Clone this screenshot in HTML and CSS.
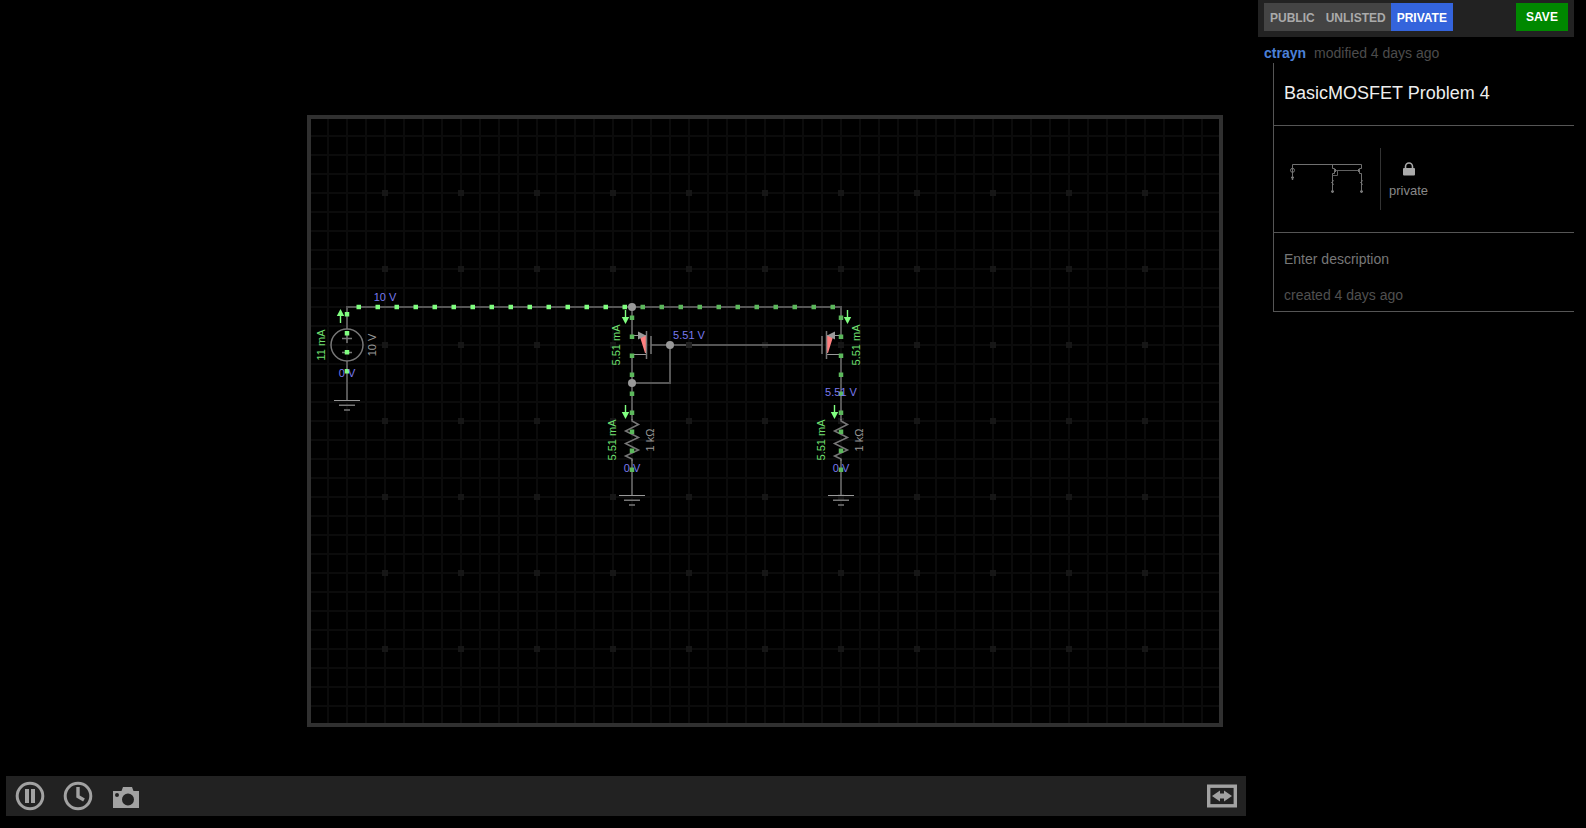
FILE: index.html
```html
<!DOCTYPE html>
<html lang="en">
<head>
<meta charset="utf-8">
<title>BasicMOSFET Problem 4</title>
<link rel="stylesheet" href="styles.css">
</head>
<body>
<main class="workspace">
  <div class="stage">
    <svg class="schematic" viewBox="0 0 1246 776" preserveAspectRatio="xMinYMin meet" role="img" aria-label="Circuit schematic">
      <defs>
        <pattern id="grid" x="327" y="135" width="19" height="19" patternUnits="userSpaceOnUse">
          <path d="M0 0H19V2H2V19H0Z" fill="#0b0b0b"/>
        </pattern>
        <pattern id="majors" x="382" y="190" width="76" height="76" patternUnits="userSpaceOnUse">
          <rect width="6" height="6" fill="#161616"/>
        </pattern>
        <g id="ground">
          <path d="M-13 .5H13" class="thin"/><path d="M-8 5.200H8M-3 10H3" class="part"/>
        </g>
        <g id="resistor">
          <path d="M0 0V2L6.500 5.500L-6.500 12L6.500 18.500L-6.500 24.500L6.500 31L-6.500 37L0 40V42" class="part"/>
        </g>
        <path id="down" d="M-.7 0H.7V7H3.700L0 14L-3.700 7H-.7Z"/>
      </defs>
      <rect x="309" y="117" width="912" height="608" class="frame"/>
      <rect x="311" y="119" width="908" height="604" fill="url(#grid)"/>
      <rect x="320" y="180" width="880" height="490" fill="url(#majors)"/>

      <g class="wire">
        <path d="M347 329V307H841V336"/>
        <path d="M347 361V400"/>
        <path d="M632 307V336M632 354V420M632 459V495"/>
        <path d="M841 354V420M841 459V495"/>
        <path d="M651 345H822M632 383H670V345"/>
      </g>
      <rect x="686" y="342" width="6" height="6" fill="#222"/>

      <circle cx="347" cy="345" r="16" class="part"/>
      <path d="M342 338.500H352M347 334V343M342 352.500H352" class="part"/>
      <use href="#ground" x="347" y="400"/>
      <use href="#ground" x="632" y="495"/>
      <use href="#ground" x="841" y="495"/>
      <use href="#resistor" x="632" y="419"/>
      <use href="#resistor" x="841" y="419"/>

      <path d="M640 337L645 353H646V335Z" class="channel"/>
      <path d="M632 335.500H646M632 354.500H646" class="thin"/>
      <path d="M646.500 331V359M651 336V354" class="part"/>
      <path d="M638 331.500L646 335.500L638 339.500Z" class="gray"/>

      <path d="M833 337L828 353H827V335Z" class="channel"/>
      <path d="M841 335.500H827M841 354.500H827" class="thin"/>
      <path d="M826.500 331V359M822 336V354" class="part"/>
      <path d="M835 331.500V339.500L827 335.500Z" class="gray"/>

      <g class="dots dots-high">
        <path d="M356.500 307H628"/>
        <path d="M347 312V375"/>
      </g>
      <g class="dots">
        <path d="M640.500 307H836"/>
        <path d="M632 315.500V473"/>
        <path d="M841 315.500V473"/>
      </g>
      <g class="gray">
        <circle cx="632" cy="307" r="4"/><circle cx="632" cy="383" r="4"/><circle cx="670" cy="345" r="4"/>
      </g>

      <g class="arrow">
        <use href="#down" transform="translate(340.500 323) rotate(180)"/>
        <use href="#down" x="625.500" y="310"/>
        <use href="#down" x="847.500" y="310"/>
        <use href="#down" x="625.500" y="405"/>
        <use href="#down" x="834.500" y="405"/>
      </g>

      <g class="label volt">
        <text x="385" y="301">10 V</text>
        <text x="347" y="377">0 V</text>
        <text x="689" y="339">5.51 V</text>
        <text x="841" y="396">5.51 V</text>
        <text x="632" y="472">0 V</text>
        <text x="841" y="472">0 V</text>
      </g>
      <g class="label amp">
        <text transform="translate(325 345) rotate(-90)">11 mA</text>
        <text transform="translate(620 345) rotate(-90)">5.51 mA</text>
        <text transform="translate(860 345) rotate(-90)">5.51 mA</text>
        <text transform="translate(616 440) rotate(-90)">5.51 mA</text>
        <text transform="translate(825 440) rotate(-90)">5.51 mA</text>
      </g>
      <g class="label value">
        <text transform="translate(376 345) rotate(-90)">10 V</text>
        <text transform="translate(654 440) rotate(-90)">1 kΩ</text>
        <text transform="translate(863 440) rotate(-90)">1 kΩ</text>
      </g>
    </svg>
  </div>
  <div class="toolbar">
    <button class="tool" type="button" aria-label="Pause">
      <svg width="30" height="30" viewBox="0 0 30 30"><circle cx="15" cy="15" r="12.800" fill="none" stroke="currentColor" stroke-width="3"/><path d="M10 8h4v14h-4zM16 8h4v14h-4z" fill="currentColor"/></svg>
    </button>
    <button class="tool" type="button" aria-label="Time settings">
      <svg width="30" height="30" viewBox="0 0 30 30"><circle cx="15" cy="15" r="12.800" fill="none" stroke="currentColor" stroke-width="3"/><path d="M15 6v9.500l6 3.500" fill="none" stroke="currentColor" stroke-width="3.400"/></svg>
    </button>
    <button class="tool" type="button" aria-label="Take picture">
      <svg width="30" height="30" viewBox="0 0 30 30"><path fill="currentColor" fill-rule="evenodd" d="M2 10h8.500l1.500-4h9l1.500 4H28v17H2zM17 12.500a6 6 0 1 0 0 12 6 6 0 0 0 0-12zM6 12a2 2 0 1 0 0 4 2 2 0 0 0 0-4z"/></svg>
    </button>
    <button class="tool tool-end" type="button" aria-label="Fit to width">
      <svg width="30" height="30" viewBox="0 0 30 30"><rect x="1.700" y="5.200" width="26.600" height="19.600" fill="none" stroke="currentColor" stroke-width="3.400"/><path d="M5 15L13 9.500v3h4v-3L25 15l-8 5.500v-3h-4v3z" fill="currentColor"/></svg>
    </button>
  </div>
</main>

<aside class="sidebar">
  <div class="actions">
    <div class="visibility" role="group" aria-label="Visibility">
      <button class="choice" type="button" aria-pressed="false">PUBLIC</button>
      <button class="choice" type="button" aria-pressed="false">UNLISTED</button>
      <button class="choice chosen" type="button" aria-pressed="true">PRIVATE</button>
    </div>
    <button class="save" type="button">SAVE</button>
  </div>
  <p class="byline"><a class="author" href="#">ctrayn</a><span>modified 4 days ago</span></p>
  <section class="details">
    <div class="title-row">
      <input class="title" type="text" aria-label="Title" value="BasicMOSFET Problem 4">
    </div>
    <div class="preview-row">
      <svg class="thumb" viewBox="0 0 96 62" aria-hidden="true">
        <g fill="none" stroke="#777" stroke-width="1">
          <path d="M8.500 29V16.500H77.500V20.500H75.500V25.500H77.500V42M48.500 16.500V20.500H50.500V25.500H48.500V42" stroke="#707070"/>
          <path d="M51 22.500H75M48.500 27.500H53.500V22.500" stroke="#606060"/>
          <circle cx="8.500" cy="22.300" r="2"/>
          <path d="M48.500 32l1 1-2 1.500 2 1.500-1 1M77.500 32l1 1-2 1.500 2 1.500-1 1M51.500 21v3M74.500 21v3"/>
          <path d="M7 29.500h3M8.500 29v3M47 43.500h3M48.500 42v3M76 43.500h3M77.500 42v3" stroke-width="1.400"/>
        </g>
      </svg>
      <div class="privacy">
        <svg width="12" height="14" viewBox="0 0 12 14" aria-hidden="true"><path d="M2.500 7V4.500a3.500 3.500 0 0 1 7 0V7" fill="none" stroke="#aaa" stroke-width="1.600"/><rect x="0" y="6" width="12" height="7.500" rx="1" fill="#aaa"/></svg>
        <span>private</span>
      </div>
    </div>
    <div class="about-row">
      <input class="description" type="text" aria-label="Description" placeholder="Enter description">
      <p class="created">created 4 days ago</p>
    </div>
  </section>
</aside>
</body>
</html>
```

FILE: styles.css
```css
* { box-sizing: border-box; }
body {
  margin: 0;
  min-height: 100vh;
  display: flex;
  background: #000;
  color: #888;
  font: 14px/20px "Liberation Sans", Arial, sans-serif;
}
button, input { font: inherit; border: 0; margin: 0; padding: 0; border-radius: 0; }
button { cursor: pointer; }
p { margin: 0; }

.workspace {
  flex: 1;
  min-width: 0;
  display: flex;
  flex-direction: column;
}
.stage { flex: 1; min-height: 0; }
.schematic { display: block; width: 100%; }
.frame { fill: none; stroke: #303030; stroke-width: 4; }
.wire path { fill: none; stroke: #555; stroke-width: 2; }
.part { fill: none; stroke: #777; stroke-width: 1.5; }
.thin { fill: none; stroke: #999; stroke-width: 1; }
.gray { fill: #999; }
.channel { fill: #ff8080; }
.dots path { fill: none; stroke: #5cb85c; stroke-width: 4.5; stroke-dasharray: 4.5 14.5; }
.dots-high path { stroke: #80ff80; }
.arrow { fill: #80ff80; }
.label { font: 11px "Liberation Sans", Arial, sans-serif; text-anchor: middle; }
.volt { fill: #7a7aee; }
.amp { fill: #70e070; }
.value { fill: #999; }

.toolbar {
  display: flex;
  height: 40px;
  margin: 0 0 12px 6px;
  background: #222;
}
.tool {
  display: grid;
  place-items: center;
  width: 48px;
  background: none;
  color: #a2a2a2;
}
.tool-end { margin-left: auto; }

.sidebar { flex: none; width: 340px; padding: 0 12px; }
.actions {
  display: flex;
  justify-content: space-between;
  align-items: flex-start;
  padding: 3px 6px 6px;
  background: #222;
}
.visibility { display: flex; background: #444; }
.choice, .save {
  height: 28px;
  font-size: 12px;
  font-weight: bold;
}
.choice { padding: 1px 5px 0 6px; background: #444; color: #aaa; }
.chosen { padding-right: 6px; background: #3464dc; color: #fff; }
.save { width: 52px; padding-bottom: 1px; background: #080; color: #fff; }

.byline {
  display: flex;
  gap: 8px;
  padding: 6px 6px 0;
  color: #4c4c4c;
}
.author { color: #4c80d8; font-weight: bold; text-decoration: none; }

.details {
  margin-left: 15px;
  border-left: 1px solid #555;
  border-bottom: 1px solid #555;
}
.title-row, .preview-row { border-bottom: 1px solid #555; }
.title-row { padding: 18px 10px 20px; }
.title, .description { display: block; width: 100%; background: none; }
.title { height: 24px; color: #eee; font-size: 18px; }
.preview-row { display: flex; padding: 22px 10px; }
.thumb { flex: none; width: 97px; height: 62px; border-right: 1px solid #333; }
.privacy {
  display: flex;
  flex-direction: column;
  align-items: center;
  gap: 6px;
  padding: 14px 8px 0;
  font-size: 13px;
  line-height: 18px;
}
.about-row { display: grid; gap: 16px; padding: 16px 10px 6px; }
.description { height: 20px; }
.description::placeholder { color: #777; opacity: 1; }
.created { color: #505050; }
```
